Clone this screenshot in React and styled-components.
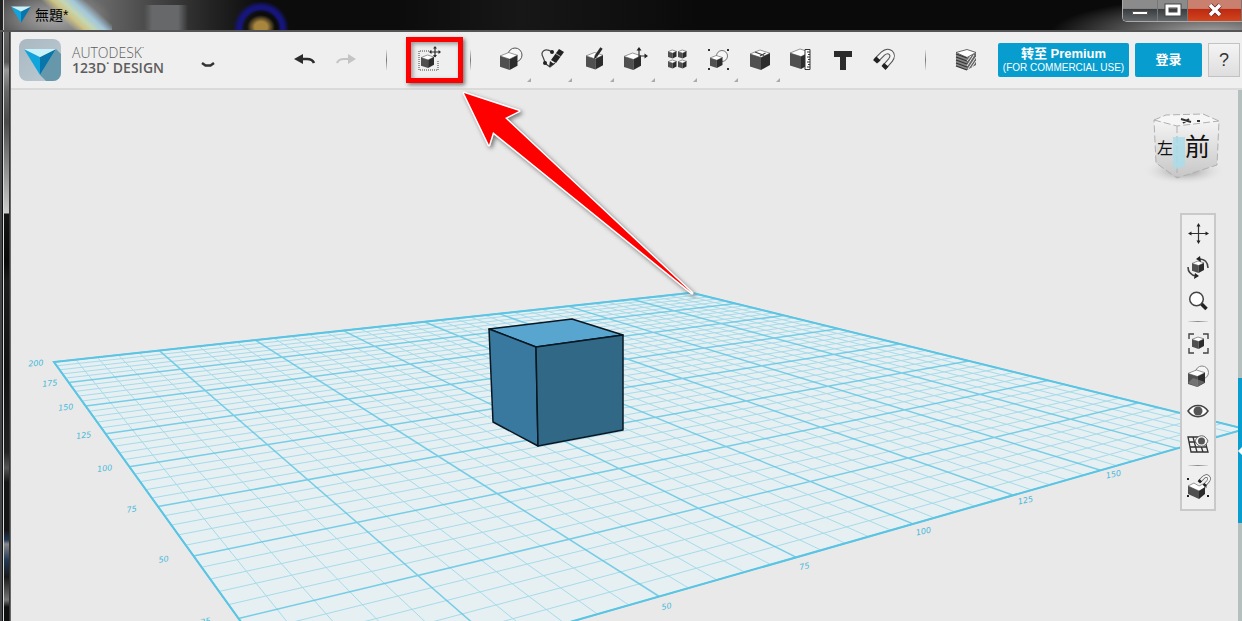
import React from "react";
import styled, { createGlobalStyle, css } from "styled-components";

const GlobalStyle = createGlobalStyle`
  *, *::before, *::after { box-sizing: border-box; }
  body { margin: 0; background: #e9e9e9; font-family: "Liberation Sans", "Noto Sans CJK SC", sans-serif; }
  button { font: inherit; padding: 0; border: 0; background: none; cursor: pointer; }
`;

const Window = styled.div`
  display: flex;
  flex-direction: column;
  min-height: 100vh;
  overflow: hidden;
`;

const TitleBar = styled.header`
  display: flex;
  align-items: flex-start;
  height: 32px;
  padding-left: 11px;
  border-bottom: 2px solid #555;
  background:
    linear-gradient(90deg, #222 0 3px, #ccc 3px 4px, transparent 4px),
    radial-gradient(ellipse 14px 12px at 261px 27px, #a8863e 0 45%, transparent 100%),
    radial-gradient(circle at 261px 29px, transparent 17px, #15157a 20px 23px, transparent 28px),
    linear-gradient(90deg, transparent, #66686a 8px 34px, transparent) 144px 5px / 44px 26px no-repeat,
    linear-gradient(42deg, transparent 28px, #cfc384 36px, #c4d6b4 42px, #a3c8dc 49px, transparent 58px) 34px 0 / 78px 32px no-repeat,
    radial-gradient(ellipse 60px 26px at 52px 18px, #a8a8a8 0, transparent 100%),
    radial-gradient(ellipse 160px 36px at 1210px 34px, #aaa 0, transparent 100%),
    linear-gradient(90deg, #4d4d4d 0, #6f6f6f 90px, #484848 150px, #242424 210px, #0c0c0c 260px, #0c0c0c 400px, #171717 520px, #0a0a0a 700px, #0a0a0a 100%);
`;

const TitleIcon = styled.svg`
  width: 20px;
  height: 20px;
  margin-top: 4px;
`;

const Title = styled.h1`
  margin: 0 auto 0 4px;
  font: 14px/30px "Liberation Sans", "Noto Sans CJK TC", sans-serif;
  color: #000;
`;

const WindowButtons = styled.div`
  display: flex;
  height: 22px;
  border: 1px solid #aaa;
  border-width: 0 0 1px 1px;
  border-radius: 0 0 0 5px;
  overflow: hidden;
`;

const WindowButton = styled.button`
  display: grid;
  place-items: center;
  width: ${(p) => (p.$close ? 54 : p.$first ? 35 : 30)}px;
  border-right: 1px solid #777;
  background: ${(p) =>
    p.$close
      ? "linear-gradient(#c9806e 0 40%, #bd2a10 45%, #d1451f)"
      : "linear-gradient(#8b8b8b 0 40%, #3a3d40 45%, #64686b)"};
`;

const Body = styled.div`
  display: flex;
  flex: 1;
`;

const Frame = styled.div`
  flex: 0 0 11px;
  background:
    linear-gradient(90deg, #45464a 0 2px, #111 2px 3px, #ddd 3px 4px, transparent 4px 9px, #333 9px 10px, #666 10px),
    linear-gradient(#666 0, #555 30px, #999 38px, #666 60px, #4a4a4a 90px, #777 120px, #ccc 181px, #141414 182px, #080808 230px, #1c1c1c 250px, #111 340px, #222 420px, #555 436px, #151515 450px, #151515 498px, #223a55 508px, #8a8a8a 512px, #223a55 528px, #181818 545px, #777 568px, #101010 575px);
`;

const Main = styled.main`
  display: flex;
  flex: 1;
  flex-direction: column;
  min-width: 0;
`;

const Toolbar = styled.nav`
  display: flex;
  align-items: center;
  height: 58px;
  padding: 0 2px 0 8px;
  border-bottom: 2px solid #dadada;
  background: #efefef;
`;

const Logo = styled.svg`
  flex: none;
  width: 42px;
  height: 42px;
`;

const Brand = styled.div`
  width: 116px;
  margin-left: 11px;
  font: 14px/15px "Open Sans", "Noto Sans", sans-serif;
  color: #5d5d5d;
  white-space: nowrap;
`;

const BrandLine = styled.div`
  font-weight: ${(p) => (p.$strong ? 600 : 300)};
`;

const ToolButton = styled.button`
  position: relative;
  display: grid;
  place-items: center;
  flex: none;
  width: ${(p) => p.$width || 40}px;
  height: 46px;
  ${(p) =>
    p.$menu &&
    css`
      &::after {
        content: "";
        position: absolute;
        right: 0;
        bottom: 1px;
        border: 2px solid transparent;
        border-right-color: #aaa;
        border-bottom-color: #aaa;
      }
    `}
`;

const MarkedButton = styled(ToolButton)`
  justify-items: start;
  padding-left: 11px;
`;

const Icon = styled.svg`
  display: block;
  width: 24px;
  height: 24px;
  overflow: visible;
`;

const Divider = styled.span`
  flex: none;
  width: 1px;
  height: 20px;
  margin: 0 ${(p) => p.$gap}px;
  background: linear-gradient(#e0e0e0, #777, #e0e0e0);
`;

const History = styled.div`
  display: flex;
  margin-left: 57px;
`;

const Tools = styled.div`
  display: grid;
  grid-template-columns: repeat(10, 1fr);
  justify-items: center;
  flex: 0 0 415px;
  margin-left: 12px;
`;

const Account = styled.div`
  display: flex;
  align-items: center;
  gap: 6px;
  margin-left: auto;
`;

const AccountButton = styled.button`
  width: ${(p) => p.$width}px;
  height: 34px;
  border-radius: 2px;
  background: #079dce;
  color: #fff;
  font: bold 13px/16px "Liberation Sans", "Noto Sans CJK SC", sans-serif;
  white-space: nowrap;
`;

const Small = styled.span`
  display: block;
  font-size: 10px;
  font-weight: 400;
  line-height: 12px;
`;

const HelpButton = styled.button`
  width: 32px;
  height: 34px;
  border: 1px solid #c2c2c2;
  background: linear-gradient(#f4f4f4, #dedede);
  font-size: 18px;
  color: #333;
`;

const Highlight = styled.span`
  position: absolute;
  inset: 0;
  border: 5px solid #fe0000;
  box-shadow: 2px 2px 4px #777, inset 2px 2px 4px #999;
`;

const Arrow = styled.svg`
  position: absolute;
  z-index: 2;
  left: 0;
  top: 0;
  width: 300px;
  height: 270px;
  overflow: visible;
  pointer-events: none;
  filter: drop-shadow(2px 2px 2px #777);
`;

const Workspace = styled.section`
  display: flex;
  flex: 1;
  position: relative;
  background: #e9e9e9;
`;

const Viewport = styled.div`
  position: relative;
  flex: 1;
  min-width: 0;
`;

const Scene = styled.svg`
  position: absolute;
  inset: 0;
  width: 100%;
  height: 100%;
`;

const GridLabel = styled.text`
  font: italic 8px "DejaVu Sans", sans-serif;
  fill: #45b9da;
  text-anchor: middle;
`;

const ViewCube = styled.svg`
  position: absolute;
  top: 16px;
  right: 8px;
  width: 90px;
  height: 80px;
  text { font-family: "Noto Sans CJK TC", sans-serif; fill: #111; }
`;

const ViewPanel = styled.aside`
  position: absolute;
  top: 123px;
  right: 22px;
  display: flex;
  flex-direction: column;
  align-items: center;
  width: 36px;
  padding: 1px 0 5px;
  border: 2px solid #c9c9c9;
  background: #efefef;
`;

const ViewButton = styled.button`
  display: grid;
  place-items: center;
  width: 32px;
  height: 34px;
`;

const PanelDivider = styled.span`
  width: 20px;
  height: 1px;
  margin: 3px 0 4px;
  background: linear-gradient(90deg, #ddd, #888, #ddd);
`;

const SideStrip = styled.div`
  flex: 0 0 4px;
  background: #b4c0bd;
`;

const StripHandle = styled.button`
  display: grid;
  place-items: center;
  width: 4px;
  height: 145px;
  margin-top: 288px;
  background: #079dce;
`;

/* Shaded block, x/y is its top left corner, s its side. */
const Block = ({ x, y, s }) => {
  const p = (...pts) => pts.map(([a, b]) => `${x + a * s},${y + b * s}`).join(" ");
  return (
    <g strokeLinejoin="round">
      <polygon points={p([0, 0.2], [0.5, 0], [1, 0.16], [0.55, 0.38])} fill="#fff" stroke="#555" strokeWidth="0.6" />
      <polygon points={p([0, 0.2], [0.55, 0.38], [0.55, 1], [0, 0.82])} fill="#505050" />
      <polygon points={p([1, 0.16], [0.55, 0.38], [0.55, 1], [1, 0.75])} fill="#2c2c2c" />
    </g>
  );
};

const Magnet = ({ x = 0, y = 0, k = 1 }) => (
  <g transform={`translate(${x} ${y}) scale(${k})`}>
    <path d="M4 12.500 11 5.500C17 .5 23 6 18.500 12L12.500 19" fill="none" stroke="#555" strokeWidth="5.500" />
    <path d="M4 12.500 11 5.500C17 .5 23 6 18.500 12L12.500 19" fill="none" stroke="#f4f4f4" strokeWidth="3.400" />
    <path d="m1 12 3.500-3.500 4 4-3.500 3zM9.500 18l2.500-3 4.500 3.500-3 3.500z" fill="#222" />
  </g>
);

const icons = {
  undo: (
    <>
      <path d="M7 11h7c4 0 6 1.500 7 4" fill="none" stroke="#2b2b2b" strokeWidth="2.600" />
      <path d="m1 11 9-5v10z" fill="#2b2b2b" />
    </>
  ),
  redo: (
    <>
      <path d="M16 11h-6c-4 0-6 1.500-7 4" fill="none" stroke="#c4c4c4" strokeWidth="2.200" />
      <path d="m22 11-8-5v10z" fill="#c4c4c4" />
    </>
  ),
  transform: (
    <>
      <path d="M14 3H2v19h19V12" fill="none" stroke="#444" strokeDasharray="1 1" />
      <Block x={4} y={7} s={13} />
      <path d="M18-1v10M13 4h10" stroke="#2b2b2b" strokeWidth="1.200" />
      <path d="m18-2 2 2.500h-4zM18 9.500l2-2.500h-4zM12 4l2.500-2v4zM24 4l-2.500-2v4z" fill="#2b2b2b" />
    </>
  ),
  primitives: (
    <>
      <circle cx="16" cy="7" r="7" fill="#f5f5f5" stroke="#555" />
      <Block x={1} y={4.5} s={17.5} />
    </>
  ),
  sketch: (
    <>
      <path d="M12 4C5-1 0 4 3 9c1 3 2 5 3 7l4 3 5-4" fill="none" stroke="#444" strokeWidth="1.200" />
      <circle cx="12" cy="4" r="2" fill="#222" />
      <circle cx="5" cy="15" r="2" fill="#222" />
      <path d="m19 1 5 3-8 11-5-3z" fill="#222" />
      <path d="m10 13 4 3-5 3z" fill="#222" />
      <path d="m15.500 5.500 5 3" stroke="#eee" strokeWidth=".7" />
    </>
  ),
  construct: (
    <>
      <Block x={4} y={4.5} s={17} />
      <path d="m14 8 5.500-8" stroke="#2b2b2b" strokeWidth="2.800" />
      <path d="m12 11 .8-4 2.700 2z" fill="#222" />
    </>
  ),
  modify: (
    <>
      <Block x={1} y={5} s={17} />
      <path d="M16 9V1M16 8h7" stroke="#333" strokeWidth="1.200" />
      <path d="m16-1 2.500 3.500h-5zM25 8l-3.500-2.500v5z" fill="#222" />
    </>
  ),
  pattern: (
    <>
      <Block x={3} y={2} s={8.5} />
      <Block x={13} y={2} s={8.5} />
      <Block x={3} y={12} s={8.5} />
      <Block x={13} y={12} s={8.5} />
    </>
  ),
  grouping: (
    <>
      <circle cx="16" cy="8" r="5.500" fill="#f5f5f5" stroke="#777" />
      <Block x={4} y={7.5} s={12.5} />
      <path d="M2 1h2v2H2zM21 1h2v2h-2zM2 20h2v2H2zM21 20h2v2h-2z" fill="#333" />
    </>
  ),
  combine: (
    <>
      <Block x={2} y={2} s={20} />
      <path d="m7 4 9 3.500M12 8l5.500-3" stroke="#444" strokeWidth="1.200" />
    </>
  ),
  measure: (
    <>
      <Block x={1} y={1} s={20} />
      <path d="M16 1.500h5v20h-5z" fill="#fff" stroke="#333" />
      <path d="M18 4h3M19 6.500h2M18 9h3M19 11.500h2M18 14h3M19 16.500h2M18 19h3" stroke="#333" />
    </>
  ),
  text: <path d="M3 3h18v6h-6v13H9V9H3z" fill="#2b2b2b" />,
  snap: <Magnet />,
  material: (
    <>
      <path d="m2 5 11 5v12L2 18z" fill="#888" />
      <path d="m13 10 9-5v12l-9 5z" fill="#666" />
      <path d="m2 4.500 11-3 9 3-9 5z" fill="#fff" stroke="#444" strokeWidth=".8" />
      {[1, 4, 7, 10, 13].map((d) => (
        <path key={d} d={`M2 ${5 + d} 13 ${9 + d}`} stroke="#333" strokeWidth="1.300" />
      ))}
      <path d="m13 13 4-5M13 18l7-11M14 21l8-12M18 19l4-6" stroke="#eee" />
    </>
  ),
  pan: (
    <>
      <path d="M12.500 4v17M4 12.500h17" stroke="#333" strokeWidth="1.200" />
      <path d="m12.500 2 2 3.500h-4zM12.500 23l2-3.500h-4zM2 12.500l3.500-2v4zM23 12.500l-3.500-2v4z" fill="#222" />
    </>
  ),
  orbit: (
    <>
      <Block x={6} y={6} s={12} />
      <path d="M2 12c0 5 3 8 8 9M22 13c0-5-3-9-9-9" fill="none" stroke="#444" strokeWidth="1.600" />
      <path d="m9 18 4 3-5 3zM14 1l-4 3 5 3z" fill="#222" />
    </>
  ),
  zoom: (
    <>
      <circle cx="10.500" cy="10" r="6.800" fill="#fff" stroke="#444" strokeWidth="1.500" />
      <path d="m15.500 15 5 5" stroke="#222" strokeWidth="3.500" />
    </>
  ),
  fit: (
    <>
      <Block x={6} y={6} s={12} />
      <path d="M3 8V3h5M17 3h5v5M22 17v5h-5M8 22H3v-5" fill="none" stroke="#444" strokeWidth="1.400" />
    </>
  ),
  shading: (
    <>
      <circle cx="16" cy="7.500" r="6.500" fill="#f5f5f5" stroke="#888" />
      <Block x={2} y={5} s={17} />
      <path d="m2 18 5-5 12 4-7.500 5z" fill="#888" opacity=".6" />
    </>
  ),
  eye: (
    <>
      <path d="M2 12C7 4.500 17 4.500 22 12 17 19.500 7 19.500 2 12z" fill="#fff" stroke="#444" strokeWidth="1.500" />
      <circle cx="12" cy="12" r="4.500" fill="#555" />
    </>
  ),
  grid: (
    <>
      <path d="M2 4h16l4 15H5zM3 9h17M4 14h17M7 4l4 15M12 4l5 15" fill="none" stroke="#333" strokeWidth="1.300" />
      <path d="M9 8c3-7 10-7 13 0-3 7-10 7-13 0z" fill="#f4f4f4" stroke="#666" />
      <circle cx="15.500" cy="8" r="3.500" fill="#555" />
    </>
  ),
  snapGroup: (
    <>
      <path d="m2 11 6-3 5 3 4-2 4 3-8 4z" fill="#fff" stroke="#555" strokeWidth=".6" />
      <path d="m2 11 11 5v8L2 19z" fill="#505050" />
      <path d="m13 16 6-4v7l-6 5z" fill="#2b2b2b" />
      <Magnet x={11} y={-1} k={0.6} />
      <path d="M1 3h2v2H1zM21 20h2v2h-2zM1 20h2v2H1z" fill="#222" />
    </>
  ),
};

const tools = [
  ["primitives", "Primitives", true],
  ["sketch", "Sketch", true],
  ["construct", "Construct", true],
  ["modify", "Modify", true],
  ["pattern", "Pattern", true],
  ["grouping", "Grouping", true],
  ["combine", "Combine", true],
  ["measure", "Measure"],
  ["text", "Text"],
  ["snap", "Snap"],
];

const viewTools = [
  ["pan", "orbit", "zoom"],
  ["fit", "shading", "eye", "grid"],
  ["snapGroup"],
];

const Glyph = ({ name }) => (
  <Icon viewBox="0 0 24 24" aria-hidden="true">{icons[name]}</Icon>
);

const Gem = () => (
  <>
    <path d="m0 0 16 8v18z" fill="#10a5dc" />
    <path d="M32 0 16 8v18z" fill="#0876aa" />
    <path d="M0 0h32L16 8z" fill="#c9f1fa" />
  </>
);

/* Work plane corners in perspective: [x, y, weight]. */
const ORIGIN = [297.2, 700, 1];
const RIGHT = [1245, 429, 1.855];
const LEFT = [54, 362, 2.228];
const project = (u, v) => {
  const at = (i) => {
    const o = i === 2 ? 1 : ORIGIN[i];
    const r = i === 2 ? RIGHT[2] : RIGHT[i] * RIGHT[2];
    const l = i === 2 ? LEFT[2] : LEFT[i] * LEFT[2];
    return o + (r - o) * u + (l - o) * v;
  };
  const w = at(2);
  return `${(at(0) / w).toFixed(1)} ${(at(1) / w).toFixed(1)}`;
};

const steps = Array.from({ length: 41 }, (_, i) => i);
const linesFor = (major) =>
  steps
    .filter((i) => (i % 5 === 0) === major)
    .map((i) => i / 40)
    .map((t) => `M${project(t, 0)}L${project(t, 1)}M${project(0, t)}L${project(1, t)}`)
    .join("");

const labels = [
  ["200", 36, 366, -4],
  ["175", 50, 386, -5],
  ["150", 66, 410, -6],
  ["125", 84, 438, -7],
  ["100", 105, 471, -7],
  ["75", 132, 512, -8],
  ["50", 164, 562, -9],
  ["25", 206, 624, -10],
  ["50", 667, 609, -10],
  ["75", 805, 569, -12],
  ["100", 924, 534, -12],
  ["125", 1026, 503, -12],
  ["150", 1114, 477, -12],
];

const WorkPlane = () => (
  <Scene viewBox="11 90 1227 531" preserveAspectRatio="xMidYMid slice">
    <path
      d={`M${project(0, 0)}L${project(1, 0)}L${project(1, 1)}L${project(0, 1)}z`}
      fill="#e6eff1"
      stroke="#56c3e3"
      strokeWidth="2"
    />
    <path d={linesFor(false)} stroke="#7fcfe6" strokeWidth="1" opacity=".62" />
    <path d={linesFor(true)} stroke="#5cc5e4" strokeWidth="1.500" opacity=".8" />
    {labels.map(([t, x, y, r]) => (
      <GridLabel key={`${x}`} transform={`translate(${x} ${y}) rotate(${r})`}>{t}</GridLabel>
    ))}
    <g stroke="#081722" strokeWidth="1.500" strokeLinejoin="round">
      <path d="m489 329 83-10 51 16-87 12z" fill="#58a5d0" />
      <path d="m489 329 47 18 2 99-45-24z" fill="#39789f" />
      <path d="m536 347 87-12v95l-85 16z" fill="#316886" />
    </g>
  </Scene>
);

const Orientation = () => (
  <ViewCube viewBox="0 0 90 80">
    <defs>
      <linearGradient id="face" x2="0" y2="1">
        <stop offset="0" stopColor="#f4f4f4" />
        <stop offset="1" stopColor="#c6c6c6" />
      </linearGradient>
      <radialGradient id="shade">
        <stop offset=".3" stopColor="#bbb" />
        <stop offset="1" stopColor="#e9e9e9" stopOpacity="0" />
      </radialGradient>
    </defs>
    <ellipse cx="44" cy="65" rx="42" ry="14" fill="url(#shade)" />
    <path d="m14 14 23 6v52l-21-15z" fill="url(#face)" />
    <path d="m37 20 42-5-2 44-40 13z" fill="url(#face)" />
    <path d="m14 14 12-5 37-1 16 7-42 5z" fill="#f6f6f6" />
    <path d="m14 14 12-5 37-1 16 7-2 44-40 13-21-15zl23 6 42-5M37 20v52" fill="none" stroke="#b0b0b0" strokeDasharray="7 3" />
    <path d="m41 13 10 3m-8 1 6-4m8 2h3" stroke="#333" strokeWidth="2" />
    <path d="M33 31h12v29l-9 3-3-3z" fill="#a9dcea" opacity=".85" />
    <text x="17" y="48" fontSize="16">左</text>
    <text x="45" y="50" fontSize="25">前</text>
  </ViewCube>
);

export default function App() {
  return (
    <Window>
      <GlobalStyle />
      <TitleBar>
        <TitleIcon viewBox="0 -4 32 32" aria-hidden="true"><Gem /></TitleIcon>
        <Title>無題*</Title>
        <WindowButtons>
          <WindowButton $first aria-label="Minimize">
            <svg width="16" height="12"><path d="M.5 6.500h15v3H.5z" fill="#fff" stroke="#555" /></svg>
          </WindowButton>
          <WindowButton aria-label="Maximize">
            <svg width="18" height="16"><path d="M3 3h12v8H3z" fill="none" stroke="#444" strokeWidth="5" /><path d="M3 3h12v8H3z" fill="none" stroke="#fff" strokeWidth="3" /></svg>
          </WindowButton>
          <WindowButton $close aria-label="Close">
            <svg width="18" height="16"><path d="m4 2 10 10M14 2 4 12" stroke="#622" strokeWidth="5" /><path d="m4 2 10 10M14 2 4 12" stroke="#fff" strokeWidth="3.500" /></svg>
          </WindowButton>
        </WindowButtons>
      </TitleBar>
      <Body>
        <Frame />
        <Main>
          <Toolbar>
            <Logo viewBox="0 0 42 42" aria-hidden="true">
              <defs>
                <linearGradient id="logo" x2="1" y2="1">
                  <stop offset="0" stopColor="#a8b7c0" />
                  <stop offset="1" stopColor="#bdccd4" />
                </linearGradient>
              </defs>
              <rect width="42" height="42" rx="8" fill="url(#logo)" />
              <path d="m37 10 5 5v19a8 8 0 0 1-8 8h-7l-6-6z" fill="#6797ab" />
              <g transform="translate(5 10)"><Gem /></g>
            </Logo>
            <Brand>
              <BrandLine>AUTODESK˙</BrandLine>
              <BrandLine $strong>123D˙ DESIGN</BrandLine>
            </Brand>
            <ToolButton aria-label="Application menu">
              <Icon viewBox="0 0 24 24"><path d="m6 15 3.500 2.500h5L18 15" fill="none" stroke="#333" strokeWidth="2.600" strokeLinejoin="round" /></Icon>
            </ToolButton>
            <History>
              <ToolButton aria-label="Undo"><Glyph name="undo" /></ToolButton>
              <ToolButton $width={42} aria-label="Redo"><Glyph name="redo" /></ToolButton>
            </History>
            <Divider $gap={19} />
            <MarkedButton $width={57} aria-label="Transform">
              <Glyph name="transform" />
              <Highlight />
              <Arrow viewBox="0 0 300 270">
                <path d="m58 56 55 18-14 7 187 175L87 95l-4 13z" fill="#fe0000" stroke="#fff" strokeWidth="3" strokeLinejoin="round" paintOrder="stroke" />
              </Arrow>
            </MarkedButton>
            <Divider $gap={7} />
            <Tools>
              {tools.map(([name, label, menu]) => (
                <ToolButton key={name} $menu={menu} aria-label={label}><Glyph name={name} /></ToolButton>
              ))}
            </Tools>
            <Divider $gap={20} />
            <ToolButton aria-label="Material"><Glyph name="material" /></ToolButton>
            <Account>
              <AccountButton $width={131}>转至 Premium<Small>(FOR COMMERCIAL USE)</Small></AccountButton>
              <AccountButton $width={67}>登录</AccountButton>
              <HelpButton aria-label="Help">?</HelpButton>
            </Account>
          </Toolbar>
          <Workspace>
            <Viewport>
              <WorkPlane />
              <Orientation />
              <ViewPanel>
                {viewTools.map((group, i) => (
                  <React.Fragment key={group[0]}>
                    {i > 0 && <PanelDivider />}
                    {group.map((name) => (
                      <ViewButton key={name} aria-label={name}><Glyph name={name} /></ViewButton>
                    ))}
                  </React.Fragment>
                ))}
              </ViewPanel>
            </Viewport>
            <SideStrip>
              <StripHandle aria-label="Open parts panel">
                <svg width="4" height="8"><path d="M4 0v8L0 4z" fill="#fff" /></svg>
              </StripHandle>
            </SideStrip>
          </Workspace>
        </Main>
      </Body>
    </Window>
  );
}
